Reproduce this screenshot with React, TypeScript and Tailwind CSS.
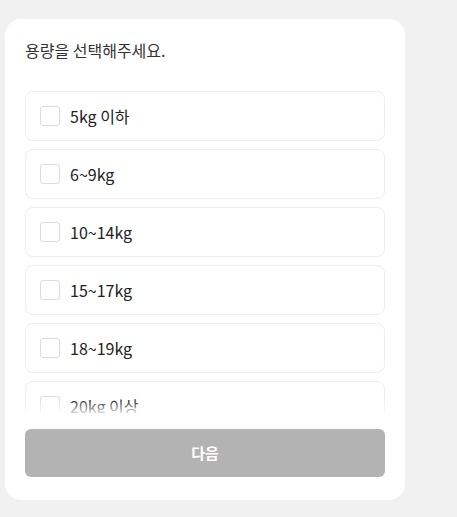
import { useState } from "react";

const OPTIONS = ["5kg 이하", "6~9kg", "10~14kg", "15~17kg", "18~19kg", "20kg 이상"];

function OptionRow({
  label,
  checked,
  onToggle,
}: {
  label: string;
  checked: boolean;
  onToggle: () => void;
}) {
  return (
    <button
      type="button"
      onClick={onToggle}
      className="flex h-[50px] w-full shrink-0 items-center gap-[10px] rounded-lg border border-[#eeeeee] bg-white px-[14px] text-left"
    >
      <span
        className={`h-5 w-5 shrink-0 rounded-[3px] border ${
          checked ? "border-[#333333] bg-[#333333]" : "border-[#dcdcdc] bg-white"
        }`}
      />
      <span className="text-[16px] leading-none text-[#222222]">{label}</span>
    </button>
  );
}

export default function App() {
  const [selected, setSelected] = useState<string | null>(null);

  return (
    <div
      className="min-h-screen bg-[#f1f1f1] pt-[19px] pl-[5px]"
      style={{ fontFamily: '"Noto Sans CJK KR", "Noto Sans", sans-serif' }}
    >
      <div className="flex h-[481px] w-[400px] flex-col rounded-2xl bg-white px-5 pt-[20px] pb-[23px]">
        <p className="text-[16px] leading-[22px] text-[#333333]">용량을 선택해주세요.</p>

        {/* 선택지 목록: 하단은 잘리고 흐리게 처리 */}
        <div className="relative mt-[30px] h-[322px] overflow-hidden">
          <div className="flex flex-col gap-2">
            {OPTIONS.map((o) => (
              <OptionRow
                key={o}
                label={o}
                checked={selected === o}
                onToggle={() => setSelected(selected === o ? null : o)}
              />
            ))}
          </div>
          <div className="pointer-events-none absolute inset-x-0 bottom-0 h-[14px] bg-gradient-to-b from-white/0 to-white/80" />
        </div>

        <button
          type="button"
          className="mt-4 h-12 w-full rounded-md bg-[#b3b3b3] text-[15px] font-bold text-white"
        >
          다음
        </button>
      </div>
    </div>
  );
}
